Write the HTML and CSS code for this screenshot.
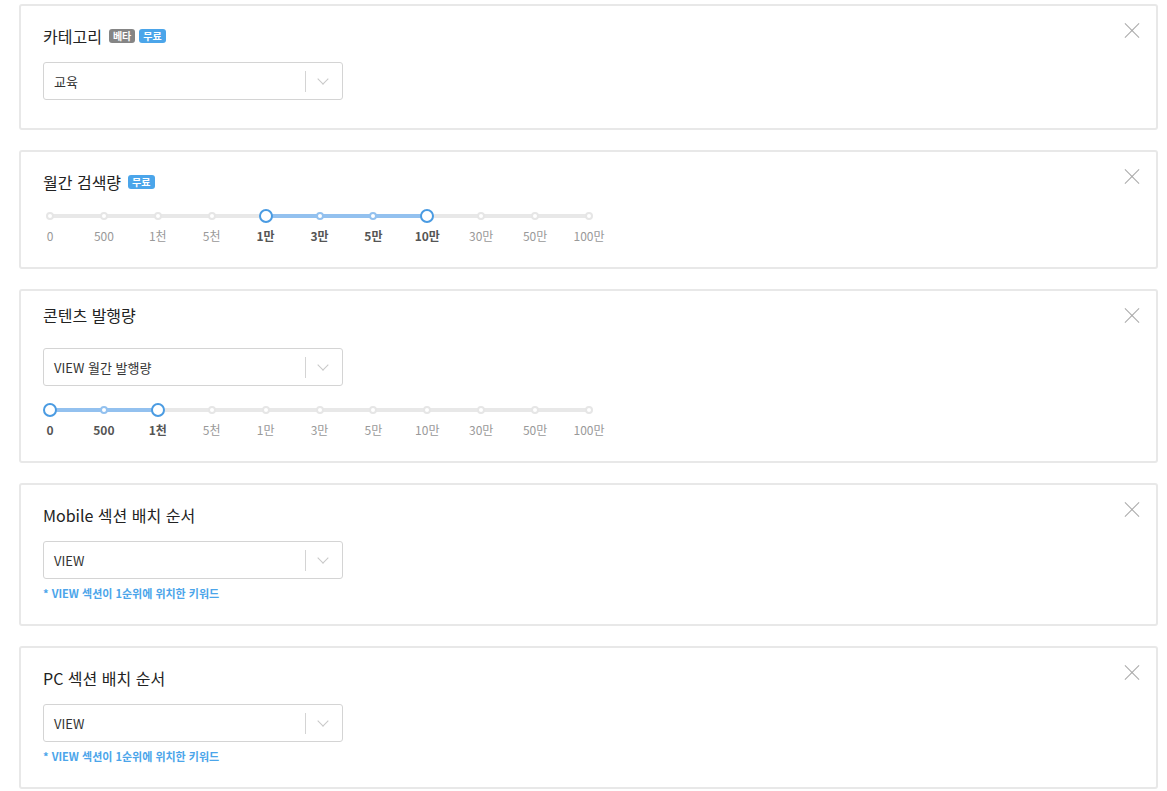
FILE: index.html
```
<!DOCTYPE html>
<html lang="ko">
<head>
  <meta charset="UTF-8" />
  <meta name="viewport" content="width=device-width, initial-scale=1.0"/>
  <title>Keyword Filters</title>
  <link rel="stylesheet" href="styles.css">
</head>
<body>

  <div class="filters">

    <div class="card">
      <button class="close" aria-label="close"></button>
      <div class="title">카테고리 <span class="badge gray">베타</span><span class="badge blue">무료</span></div>
      <div class="select">
        <span class="value">교육</span>
        <span class="arrow"></span>
      </div>
    </div>

    <div class="card">
      <button class="close" aria-label="close"></button>
      <div class="title">월간 검색량 <span class="badge blue">무료</span></div>
      <div class="slider" data-from="4" data-to="7"></div>
    </div>

    <div class="card card-tight">
      <button class="close" aria-label="close"></button>
      <div class="title">콘텐츠 발행량</div>
      <div class="select">
        <span class="value">VIEW 월간 발행량</span>
        <span class="arrow"></span>
      </div>
      <div class="slider slider-below" data-from="0" data-to="2"></div>
    </div>

    <div class="card">
      <button class="close" aria-label="close"></button>
      <div class="title">Mobile 섹션 배치 순서</div>
      <div class="select">
        <span class="value">VIEW</span>
        <span class="arrow"></span>
      </div>
      <div class="note">* VIEW 섹션이 1순위에 위치한 키워드</div>
    </div>

    <div class="card">
      <button class="close" aria-label="close"></button>
      <div class="title">PC 섹션 배치 순서</div>
      <div class="select">
        <span class="value">VIEW</span>
        <span class="arrow"></span>
      </div>
      <div class="note">* VIEW 섹션이 1순위에 위치한 키워드</div>
    </div>

  </div>

<script>
  const steps = ["0", "500", "1천", "5천", "1만", "3만", "5만", "10만", "30만", "50만", "100만"];

  document.querySelectorAll(".slider").forEach(slider => {
    const from = parseInt(slider.dataset.from);
    const to = parseInt(slider.dataset.to);
    const last = steps.length - 1;

    const track = document.createElement("div");
    track.className = "track";

    const fill = document.createElement("div");
    fill.className = "fill";
    fill.style.left = (from / last * 100) + "%";
    fill.style.width = ((to - from) / last * 100) + "%";
    track.appendChild(fill);

    const labels = document.createElement("div");
    labels.className = "labels";

    steps.forEach((text, i) => {
      const dot = document.createElement("span");
      dot.className = "dot";
      if (i === from || i === to) dot.className += " knob";
      else if (i > from && i < to) dot.className += " on";
      dot.style.left = (i / last * 100) + "%";
      track.appendChild(dot);

      const label = document.createElement("span");
      label.className = "label";
      if (i >= from && i <= to) label.className += " on";
      label.style.left = (i / last * 100) + "%";
      label.textContent = text;
      labels.appendChild(label);
    });

    slider.appendChild(track);
    slider.appendChild(labels);
  });
</script>

</body>
</html>
```

FILE: styles.css
```
body {
  margin: 0;
  font-family: "Noto Sans CJK KR", "Noto Sans", sans-serif;
  background-color: #fff;
  color: #222;
}

.filters {
  display: flex;
  flex-direction: column;
  gap: 20px;
  padding: 4px 9px 0 19px;
}

.card {
  position: relative;
  border: 2px solid #e8e8e8;
  border-radius: 3px;
  padding: 18px 22px 24px 22px;
}

.card-tight {
  padding-top: 12px;
}

.title {
  display: flex;
  align-items: center;
  font-size: 16px;
  line-height: 24px;
  color: #222;
}

.badge {
  display: inline-block;
  height: 14px;
  line-height: 14px;
  padding: 0 4px;
  border-radius: 3px;
  font-size: 10px;
  font-weight: bold;
  color: #fff;
  margin-left: 4px;
}

.title .badge:first-child,
.badge.gray {
  margin-left: 7px;
}

.badge.gray {
  background-color: #858585;
}

.badge.blue {
  background-color: #4ba5ea;
}

.close {
  position: absolute;
  top: 16px;
  right: 16px;
  width: 16px;
  height: 16px;
  border: none;
  background: none;
  padding: 0;
  cursor: pointer;
}

.close::before,
.close::after {
  content: "";
  position: absolute;
  left: -2px;
  top: 7.5px;
  width: 20px;
  height: 1px;
  background-color: #a8a8a8;
  transform: rotate(45deg);
}

.close::after {
  transform: rotate(-45deg);
}

.select {
  display: flex;
  align-items: center;
  width: 298px;
  height: 36px;
  margin-top: 14px;
  border: 1px solid #d4d4d4;
  border-radius: 3px;
  font-size: 13px;
  color: #333;
}

.card > .select:last-child {
  margin-bottom: 4px;
}

.card-tight .select {
  margin-top: 21px;
}

.value {
  flex: 1;
  padding-left: 10px;
}

.arrow {
  position: relative;
  width: 36px;
  height: 21px;
  border-left: 1px solid #d4d4d4;
}

.arrow::after {
  content: "";
  position: absolute;
  left: 13px;
  top: 4px;
  width: 7px;
  height: 7px;
  border-right: 1.5px solid #c8c8c8;
  border-bottom: 1.5px solid #c8c8c8;
  transform: rotate(45deg);
}

.slider {
  width: 539px;
  margin: 20px 0 0 7px;
}

.slider-below {
  margin-top: 22px;
}

.track {
  position: relative;
  height: 4px;
  margin: 6px 0;
  background-color: #e8e8e8;
  border-radius: 2px;
}

.fill {
  position: absolute;
  top: 0;
  height: 4px;
  background-color: #93c1ef;
}

.dot {
  position: absolute;
  top: 2px;
  width: 4px;
  height: 4px;
  border: 2px solid #e6e6e6;
  border-radius: 50%;
  background-color: #fff;
  transform: translate(-50%, -50%);
}

.dot.on {
  border-color: #93c1ef;
}

.dot.knob {
  width: 10px;
  height: 10px;
  border-color: #4a9be2;
}

.labels {
  position: relative;
  height: 15px;
  margin-top: 10px;
}

.label {
  position: absolute;
  top: 0;
  font-size: 12px;
  line-height: 16px;
  color: #999;
  white-space: nowrap;
  transform: translateX(-50%);
}

.label.on {
  color: #555;
  font-weight: bold;
}

.note {
  margin-top: 7px;
  font-size: 11px;
  line-height: 14px;
  font-weight: bold;
  color: #4ba5ea;
}
```
